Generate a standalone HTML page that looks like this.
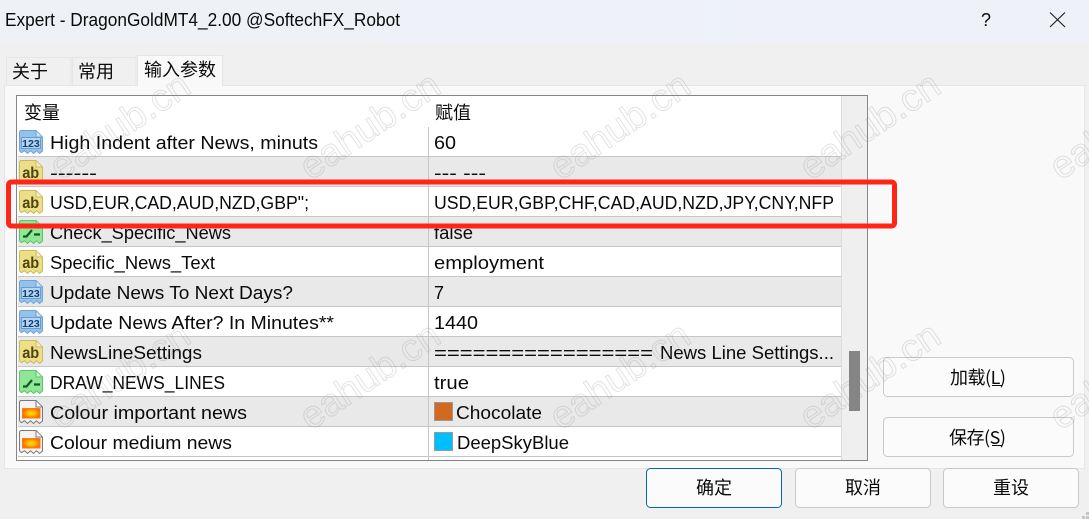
<!DOCTYPE html>
<html><head><meta charset="utf-8"><title>Expert</title>
<style>
html,body{margin:0;padding:0;width:1089px;height:519px;overflow:hidden;background:#f0f0f0}
svg{display:block}
text{font-family:"Liberation Sans","Noto Sans CJK SC",sans-serif;font-size:18.6px;fill:#0a0a0a}
.c{font-family:"Noto Sans CJK SC","Liberation Sans",sans-serif;font-size:18px}
.b{fill:#fbfbfb;stroke:#c9c9c9}
.s{fill:#c6c6c6}
.g{fill:#e9e9e9}
.w{font-size:38px;fill:none;stroke:#8c8c8c;stroke-opacity:.24;stroke-width:1}
.n{font-size:10.5px;font-weight:bold;fill:#123f78}
.a{font-size:15.5px;font-weight:bold;fill:#4f4510}
</style></head><body>
<svg width="1089" height="519" viewBox="0 0 1089 519" xmlns="http://www.w3.org/2000/svg">
<defs>
<linearGradient id="tb" x1="0" x2="1" y1="0" y2="0"><stop offset="0" stop-color="#eef2f6"/><stop offset="1" stop-color="#eef1fa"/></linearGradient>
<radialGradient id="fire"><stop offset="0" stop-color="#ffe600"/><stop offset=".55" stop-color="#ffb000"/><stop offset="1" stop-color="#ff6a00"/></radialGradient>
<path id="p" d="M2.500 .5H17L23.500 7V21L20.500 23.500L17.500 20.800L14.500 23.500L11.500 20.800L8.500 23.500L5.500 20.800L2.500 22.500Q.5 21.500 .5 20V2.500Q.5 .5 2.500 .5Z"/>
<g id="blue"><use href="#p" fill="#93c2ea" stroke="#6fa3d6"/><path d="M17 1V7H23" fill="#cfe3f6" stroke="#6fa3d6"/><rect x="2.500" y="7.500" width="19" height="11" fill="#b5d5f1" stroke="#6a9cd0"/><text x="3.200" y="17" class="n" textLength="17.600" lengthAdjust="spacingAndGlyphs">123</text></g>
<g id="yel"><use href="#p" fill="#ecdf88" stroke="#c9ba5e"/><path d="M17 1V7H23" fill="#f6f0c0" stroke="#c9ba5e"/><text x="3.200" y="18" class="a" textLength="17" lengthAdjust="spacingAndGlyphs">ab</text></g>
<g id="grn"><use href="#p" fill="#8fe695" stroke="#5cc46a"/><path d="M17 1V7H23" fill="#c8f3cb" stroke="#5cc46a"/><path d="M4 16.500H7.500L13 10M15 14.500H21" fill="none" stroke="#0d5a25" stroke-width="2.200"/></g>
<g id="col"><use href="#p" fill="#f3f3f3" stroke="#777"/><path d="M17 1V7H23" fill="#fff" stroke="#777"/><rect x="3.500" y="8.500" width="17.500" height="9.500" fill="url(#fire)" stroke="#ff7a10"/></g>
</defs>

<rect width="1089" height="519" fill="#f0f0f0"/>
<rect width="1089" height="42" fill="url(#tb)"/>
<text x="5" y="26" textLength="395" lengthAdjust="spacingAndGlyphs">Expert - DragonGoldMT4_2.00 @SoftechFX_Robot</text>
<text x="981" y="26" textLength="10" lengthAdjust="spacingAndGlyphs">?</text>
<path d="M1050 12.500L1065 27M1065 12.500L1050 27" stroke="#222" stroke-width="1.200" fill="none"/>

<!-- panel -->
<rect x="4.500" y="85.500" width="1080" height="383" fill="#f9f9f9" stroke="#e6e6e6"/>
<path d="M6.500 85V57.500H71V85M72.500 85V57.500H136V85" fill="#f0f0f0" stroke="#e6e6e6"/>
<path d="M137.500 86V55.500H222.500V86Z" fill="#f9f9f9" stroke="none"/>
<path d="M137.500 86V55.500H222.500V86" fill="none" stroke="#e6e6e6"/>
<text class="c" x="12" y="78" textLength="36">关于</text>
<text class="c" x="78" y="78" textLength="36">常用</text>
<text class="c" x="144" y="76" textLength="72">输入参数</text>

<!-- table -->
<rect x="16.500" y="95.500" width="851" height="365" fill="#fff" stroke="#85858f"/>
<rect x="842" y="96" width="25" height="364" fill="#efefef"/>
<rect x="841" y="96" width="1" height="364" fill="#dcdcdc"/>
<rect x="849" y="351" width="11" height="60" fill="#858585"/>
<rect class="g" x="18" y="157" width="823" height="29"/>
<rect class="g" x="18" y="217" width="823" height="29"/>
<rect class="g" x="18" y="277" width="823" height="29"/>
<rect class="g" x="18" y="337" width="823" height="29"/>
<rect class="g" x="18" y="397" width="823" height="29"/>
<rect class="s" x="18" y="156" width="823" height="1"/>
<rect class="s" x="18" y="186" width="823" height="1"/>
<rect class="s" x="18" y="216" width="823" height="1"/>
<rect class="s" x="18" y="246" width="823" height="1"/>
<rect class="s" x="18" y="276" width="823" height="1"/>
<rect class="s" x="18" y="306" width="823" height="1"/>
<rect class="s" x="18" y="336" width="823" height="1"/>
<rect class="s" x="18" y="366" width="823" height="1"/>
<rect class="s" x="18" y="396" width="823" height="1"/>
<rect class="s" x="18" y="426" width="823" height="1"/>
<rect class="s" x="18" y="456" width="823" height="1"/>
<rect class="s" x="428" y="127" width="1" height="333"/>

<text class="c" x="24" y="119" textLength="36">变量</text>
<text class="c" x="435" y="119" textLength="36">赋值</text>

<use href="#blue" x="19" y="130"/>
<use href="#yel" x="19" y="160"/>
<use href="#yel" x="19" y="190"/>
<use href="#grn" x="19" y="220"/>
<use href="#yel" x="19" y="250"/>
<use href="#blue" x="19" y="280"/>
<use href="#blue" x="19" y="310"/>
<use href="#yel" x="19" y="340"/>
<use href="#grn" x="19" y="370"/>
<use href="#col" x="19" y="400"/>
<use href="#col" x="19" y="430"/>

<text x="50" y="149" textLength="268" lengthAdjust="spacingAndGlyphs">High Indent after News, minuts</text>
<text x="50" y="179" textLength="47" lengthAdjust="spacingAndGlyphs">------</text>
<text x="50" y="209" textLength="259" lengthAdjust="spacingAndGlyphs">USD,EUR,CAD,AUD,NZD,GBP";</text>
<text x="50" y="239" textLength="181" lengthAdjust="spacingAndGlyphs">Check_Specific_News</text>
<text x="50" y="269" textLength="165" lengthAdjust="spacingAndGlyphs">Specific_News_Text</text>
<text x="50" y="299" textLength="243" lengthAdjust="spacingAndGlyphs">Update News To Next Days?</text>
<text x="50" y="329" textLength="284" lengthAdjust="spacingAndGlyphs">Update News After? In Minutes**</text>
<text x="50" y="359" textLength="152" lengthAdjust="spacingAndGlyphs">NewsLineSettings</text>
<text x="50" y="389" textLength="175" lengthAdjust="spacingAndGlyphs">DRAW_NEWS_LINES</text>
<text x="50" y="419" textLength="197" lengthAdjust="spacingAndGlyphs">Colour important news</text>
<text x="50" y="449" textLength="182" lengthAdjust="spacingAndGlyphs">Colour medium news</text>

<text x="434" y="149" textLength="22" lengthAdjust="spacingAndGlyphs">60</text>
<text x="434" y="179" textLength="52" lengthAdjust="spacingAndGlyphs">--- ---</text>
<text x="434" y="209" textLength="400" lengthAdjust="spacingAndGlyphs">USD,EUR,GBP,CHF,CAD,AUD,NZD,JPY,CNY,NFP</text>
<text x="434" y="239" textLength="39" lengthAdjust="spacingAndGlyphs">false</text>
<text x="434" y="269" textLength="110" lengthAdjust="spacingAndGlyphs">employment</text>
<text x="434" y="299" textLength="10" lengthAdjust="spacingAndGlyphs">7</text>
<text x="434" y="329" textLength="44" lengthAdjust="spacingAndGlyphs">1440</text>
<text x="434" y="359" textLength="219" lengthAdjust="spacingAndGlyphs">=================</text>
<text x="660" y="359" textLength="174" lengthAdjust="spacingAndGlyphs">News Line Settings...</text>
<text x="434" y="389" textLength="35" lengthAdjust="spacingAndGlyphs">true</text>
<rect x="434.500" y="402.500" width="18" height="18" fill="#d2691e" stroke="#999"/>
<text x="456" y="419" textLength="86" lengthAdjust="spacingAndGlyphs">Chocolate</text>
<rect x="434.500" y="432.500" width="18" height="18" fill="#00bfff" stroke="#999"/>
<text x="457" y="449" textLength="112" lengthAdjust="spacingAndGlyphs">DeepSkyBlue</text>

<!-- buttons -->
<rect class="b" x="883.500" y="357.500" width="190" height="39" rx="4"/>
<text class="c" x="950" y="384" textLength="56">加载(L)</text>
<rect x="992" y="385" width="10" height="1" fill="#111"/>
<rect class="b" x="883.500" y="417.500" width="190" height="39" rx="4"/>
<text class="c" x="949" y="444" textLength="57">保存(S)</text>
<rect x="992" y="445" width="10" height="1" fill="#111"/>
<rect x="646.500" y="468.500" width="135" height="39" rx="4" fill="#fbfbfb" stroke="#0067c0"/>
<text class="c" x="696" y="494" textLength="36">确定</text>
<rect class="b" x="795.500" y="468.500" width="135" height="39" rx="4"/>
<text class="c" x="845" y="494" textLength="36">取消</text>
<rect class="b" x="943.500" y="468.500" width="135" height="39" rx="4"/>
<text class="c" x="993" y="494" textLength="36">重设</text>
<path d="M1086 512h3v3h-3zM1082 516h3v3h-3zM1086 516h3v3h-3z" fill="#c4c4c4"/>

<!-- watermark -->
<g>
<text class="w" textLength="160" lengthAdjust="spacingAndGlyphs" transform="translate(60.500,181) rotate(-34)">eahub.cn</text>
<text class="w" textLength="160" lengthAdjust="spacingAndGlyphs" transform="translate(310.500,181) rotate(-34)">eahub.cn</text>
<text class="w" textLength="160" lengthAdjust="spacingAndGlyphs" transform="translate(560.500,181) rotate(-34)">eahub.cn</text>
<text class="w" textLength="160" lengthAdjust="spacingAndGlyphs" transform="translate(810.500,181) rotate(-34)">eahub.cn</text>
<text class="w" textLength="160" lengthAdjust="spacingAndGlyphs" transform="translate(1060.500,181) rotate(-34)">eahub.cn</text>
<text class="w" textLength="160" lengthAdjust="spacingAndGlyphs" transform="translate(60.500,431) rotate(-34)">eahub.cn</text>
<text class="w" textLength="160" lengthAdjust="spacingAndGlyphs" transform="translate(310.500,431) rotate(-34)">eahub.cn</text>
<text class="w" textLength="160" lengthAdjust="spacingAndGlyphs" transform="translate(560.500,431) rotate(-34)">eahub.cn</text>
<text class="w" textLength="160" lengthAdjust="spacingAndGlyphs" transform="translate(810.500,431) rotate(-34)">eahub.cn</text>
<text class="w" textLength="160" lengthAdjust="spacingAndGlyphs" transform="translate(1060.500,431) rotate(-34)">eahub.cn</text>
</g>

<!-- red highlight -->
<rect x="8.500" y="182" width="886" height="44" rx="3" fill="none" stroke="#ff2618" stroke-width="5"/>
</svg>
</body></html>
